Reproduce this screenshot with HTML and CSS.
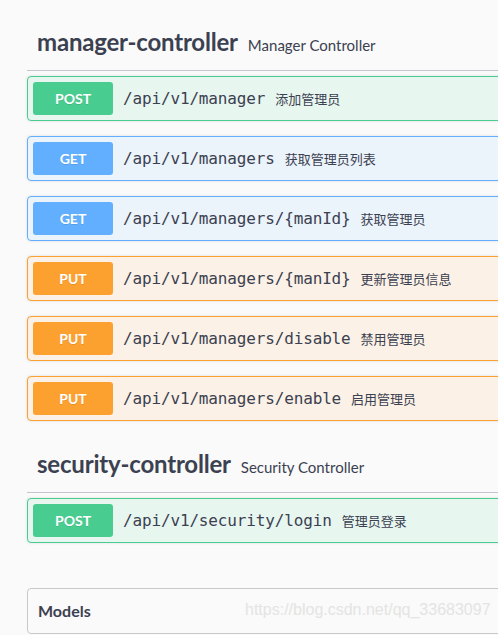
FILE: index.html
```html
<!DOCTYPE html>
<html lang="zh">
<head>
<meta charset="utf-8">
<title>Swagger UI</title>
<link rel="stylesheet" href="styles.css">
</head>
<body>
<div class="wrapper">
  <section class="tag-section">
    <h4 class="tag"><span class="tag-name">manager-controller</span><small class="tag-desc">Manager Controller</small></h4>
    <div class="opblock post"><span class="method">POST</span><span class="path">/api/v1/manager</span><span class="desc">添加管理员</span></div>
    <div class="opblock get"><span class="method">GET</span><span class="path">/api/v1/managers</span><span class="desc">获取管理员列表</span></div>
    <div class="opblock get"><span class="method">GET</span><span class="path">/api/v1/managers/{manId}</span><span class="desc">获取管理员</span></div>
    <div class="opblock put"><span class="method">PUT</span><span class="path">/api/v1/managers/{manId}</span><span class="desc">更新管理员信息</span></div>
    <div class="opblock put"><span class="method">PUT</span><span class="path">/api/v1/managers/disable</span><span class="desc">禁用管理员</span></div>
    <div class="opblock put"><span class="method">PUT</span><span class="path">/api/v1/managers/enable</span><span class="desc">启用管理员</span></div>
  </section>
  <section class="tag-section">
    <h4 class="tag"><span class="tag-name">security-controller</span><small class="tag-desc">Security Controller</small></h4>
    <div class="opblock post"><span class="method">POST</span><span class="path">/api/v1/security/login</span><span class="desc">管理员登录</span></div>
  </section>
  <section class="models">
    <h4 class="models-title">Models</h4>
    <span class="watermark">https://blog.csdn.net/qq_33683097</span>
  </section>
</div>
</body>
</html>
```
FILE: styles.css
```css
html, body {
  margin: 0;
  padding: 0;
  overflow: hidden;
}
body {
  background: #fafafa;
  color: #3b4151;
  font-family: Lato, "Noto Sans", "Noto Sans CJK SC", sans-serif;
}
.wrapper {
  padding: 14px 0 0 27px;
  width: 520px;
}
.tag {
  display: flex;
  align-items: baseline;
  margin: 0 0 5px;
  padding: 10px 20px 10px 10px;
  border-bottom: 1px solid #c4c6cb;
  line-height: 36px;
  font-weight: 700;
}
.tag-name {
  font-size: 24px;
  font-weight: 700;
  letter-spacing: -0.2px;
}
.tag-desc {
  font-size: 15px;
  line-height: 1;
  font-weight: 400;
  margin-left: 10px;
}
.opblock {
  display: flex;
  align-items: center;
  margin: 0 0 15px;
  padding: 5px;
  border: 1px solid;
  border-radius: 4px;
  box-shadow: 0 0 3px rgba(0, 0, 0, 0.12);
}
.opblock.post { border-color: #49cc90; background: #e8f6f0; }
.opblock.get { border-color: #61affe; background: #ebf3fb; }
.opblock.put { border-color: #fca130; background: #fbf1e6; }
.method {
  width: 80px;
  height: 33px;
  display: flex;
  align-items: center;
  justify-content: center;
  border-radius: 3px;
  color: #fff;
  font-family: Lato, "Noto Sans", sans-serif;
  font-weight: 700;
  font-size: 14px;
  text-shadow: 0 1px 0 rgba(0, 0, 0, 0.1);
  flex: none;
}
.post .method { background: #49cc90; }
.get .method { background: #61affe; }
.put .method { background: #fca130; }
.path {
  margin-left: 10px;
  font-family: "DejaVu Sans Mono", "Liberation Mono", monospace;
  font-size: 16px;
  letter-spacing: -0.15px;
  color: #3b4151;
}
.desc {
  margin-left: 10px;
  font-family: "Noto Sans CJK SC", "Noto Sans", sans-serif;
  font-size: 13px;
  color: #3b4151;
}
.models {
  position: relative;
  margin-top: 45px;
  border: 1px solid #c8c8c8;
  border-radius: 4px;
}
.models-title {
  margin: 0;
  padding: 10px 20px 10px 10px;
  font-size: 16px;
  line-height: 24px;
  font-weight: 700;
  color: #3b4151;
}
.watermark {
  position: absolute;
  left: 217px;
  top: 12px;
  font-family: "Liberation Sans", Arial, sans-serif;
  font-size: 16px;
  color: #e4e4e4;
  white-space: nowrap;
}
```
